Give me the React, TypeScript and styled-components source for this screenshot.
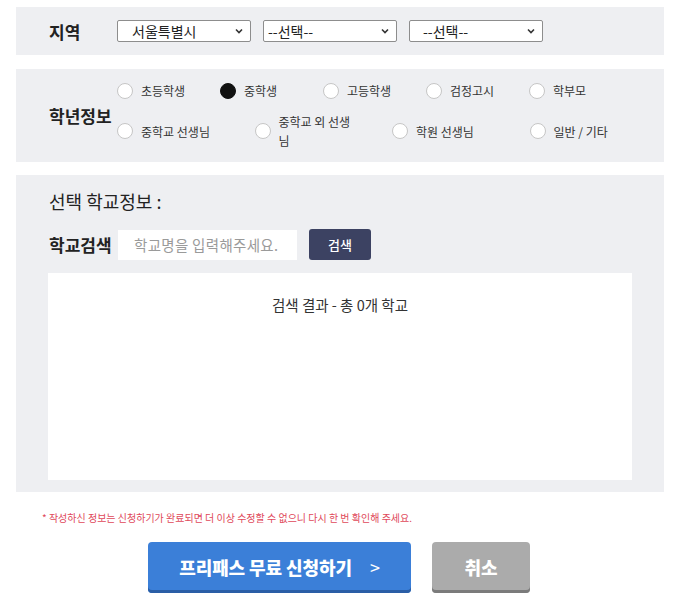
import { createGlobalStyle } from 'styled-components';
import styled from 'styled-components';

const GlobalStyle = createGlobalStyle`
  html, body {
    margin: 0;
    padding: 0;
    background: #fff;
  }
  body {
    font-family: 'Noto Sans CJK KR', 'Noto Sans', sans-serif;
    color: #222;
  }
  * {
    box-sizing: border-box;
  }
`;

const firstRow = [
  { id: 'elem', label: '초등학생' },
  { id: 'middle', label: '중학생' },
  { id: 'high', label: '고등학생' },
  { id: 'ged', label: '검정고시' },
  { id: 'parent', label: '학부모' },
];

const secondRow = [
  { id: 'mteacher', label: '중학교 선생님' },
  { id: 'oteacher', label: '중학교 외 선생님' },
  { id: 'academy', label: '학원 선생님' },
  { id: 'etc', label: '일반 / 기타' },
];

function Chevron() {
  return (
    <ChevronMark
      width="8"
      height="6"
      viewBox="0 0 8 6"
    >
      <path
        d="M1 1.5 L4 4.5 L7 1.5"
        fill="none"
        stroke="#333"
        strokeWidth="1.6"
      />
    </ChevronMark>
  );
}

function Select({ value, indent }: { value: string; indent: number }) {
  return (
    <SelectWrap>
      <SelectBox
        defaultValue={value}
        $indent={indent}
      >
        <option value={value}>{value}</option>
      </SelectBox>
      <Chevron />
    </SelectWrap>
  );
}

function Radio({ label, checked }: { label: string; checked?: boolean }) {
  return (
    <RadioItem>
      <RadioInput
        type="radio"
        name="grade"
        defaultChecked={checked}
      />
      <RadioText>{label}</RadioText>
    </RadioItem>
  );
}

export default function App() {
  return (
    <>
      <GlobalStyle />
      <Page>
        <Panel>
          <RegionRow>
            <Label>지역</Label>
            <SelectGroup>
              <Select
                value="서울특별시"
                indent={14}
              />
              <Select
                value="--선택--"
                indent={4}
              />
              <Select
                value="--선택--"
                indent={13}
              />
            </SelectGroup>
          </RegionRow>
        </Panel>

        <Panel>
          <GradeRow>
            <Label>학년정보</Label>
            <RadioRows>
              <RadioGrid $cols={5}>
                {firstRow.map(r => (
                  <Radio
                    key={r.id}
                    label={r.label}
                    checked={r.id === 'middle'}
                  />
                ))}
              </RadioGrid>
              <RadioGrid $cols={4}>
                {secondRow.map(r => (
                  <Radio
                    key={r.id}
                    label={r.label}
                  />
                ))}
              </RadioGrid>
            </RadioRows>
          </GradeRow>
        </Panel>

        <SchoolPanel>
          <SchoolTitle>선택 학교정보 :</SchoolTitle>
          <SearchRow>
            <Label>학교검색</Label>
            <SearchInput placeholder="학교명을 입력해주세요." />
            <SearchButton type="button">검색</SearchButton>
          </SearchRow>
          <ResultBox>
            <ResultText>검색 결과 - 총 0개 학교</ResultText>
          </ResultBox>
        </SchoolPanel>

        <Notice>* 작성하신 정보는 신청하기가 완료되면 더 이상 수정할 수 없으니 다시 한 번 확인해 주세요.</Notice>

        <ButtonRow>
          <ActionButton
            type="button"
            $tone="primary"
          >
            프리패스 무료 신청하기 <Arrow>&gt;</Arrow>
          </ActionButton>
          <ActionButton
            type="button"
            $tone="cancel"
          >
            취소
          </ActionButton>
        </ButtonRow>
      </Page>
    </>
  );
}

const Page = styled.div`
  width: 648px;
  margin-left: 16px;
  padding-top: 7px;
  display: flex;
  flex-direction: column;
  gap: 14px;
`;

const Panel = styled.section`
  background: #eeeff2;
`;

const Label = styled.span`
  flex: none;
  font-size: 17px;
  font-weight: 700;
  color: #222;
`;

const RegionRow = styled.div`
  height: 48px;
  display: flex;
  align-items: center;
  padding-left: 33px;

  ${Label} {
    width: 68px;
  }
`;

const SelectGroup = styled.div`
  display: flex;
  gap: 12px;
`;

const SelectWrap = styled.div`
  position: relative;
  width: 134px;
  height: 22px;
`;

const SelectBox = styled.select<{ $indent: number }>`
  appearance: none;
  display: block;
  width: 100%;
  height: 100%;
  border: 1px solid #8d8d8d;
  border-radius: 2px;
  background: #fff;
  padding: 0 20px 0 ${p => p.$indent}px;
  font-family: inherit;
  font-size: 14px;
  line-height: 20px;
  color: #222;
  outline: none;
`;

const ChevronMark = styled.svg`
  position: absolute;
  right: 8px;
  top: 8px;
  pointer-events: none;
`;

const GradeRow = styled.div`
  display: flex;
  align-items: center;
  padding: 12px 0 12px 33px;

  ${Label} {
    width: 68px;
  }
`;

const RadioRows = styled.div`
  display: flex;
  flex-direction: column;
  gap: 12px;
`;

const RadioGrid = styled.div<{ $cols: number }>`
  display: grid;
  grid-template-columns: ${p => (p.$cols === 5 ? 'repeat(5, 103px)' : 'repeat(3, 137.5px) 103px')};
  align-items: center;
`;

const RadioItem = styled.label`
  display: flex;
  align-items: center;
  gap: 8px;
`;

const RadioInput = styled.input`
  appearance: none;
  flex: none;
  margin: 0;
  width: 16px;
  height: 16px;
  border-radius: 50%;
  border: 1px solid #c6c6c6;
  background: #fff;

  &:checked {
    background: #111;
    border-color: #111;
  }
`;

const RadioText = styled.span`
  max-width: 82px;
  font-size: 12px;
  line-height: 19px;
  color: #333;
`;

const SchoolPanel = styled(Panel)`
  padding: 13px 32px 12px 32px;
  margin-top: -1px;
`;

const SchoolTitle = styled.h2`
  margin: 0;
  padding-left: 1px;
  font-size: 18px;
  font-weight: 400;
  line-height: 26px;
  color: #222;
`;

const SearchRow = styled.div`
  display: flex;
  align-items: center;
  margin-top: 15px;
  padding-left: 1px;

  ${Label} {
    width: 69px;
  }
`;

const SearchInput = styled.input`
  width: 179px;
  height: 30px;
  border: none;
  background: #fff;
  padding: 0 0 0 16px;
  font-family: inherit;
  font-size: 14.5px;
  letter-spacing: 0.3px;
  color: #333;
  outline: none;

  &::placeholder {
    color: #9a9a9a;
  }
`;

const SearchButton = styled.button`
  margin-left: 12px;
  width: 62px;
  height: 31px;
  border: none;
  border-radius: 3px;
  background: #3c4262;
  color: #fff;
  font-family: inherit;
  font-size: 13px;
  font-weight: 500;
`;

const ResultBox = styled.div`
  margin-top: 13px;
  height: 207px;
  background: #fff;
  padding-top: 20px;
  text-align: center;
`;

const ResultText = styled.p`
  margin: 0;
  font-size: 14.5px;
  line-height: 24px;
  color: #333;
`;

const Notice = styled.p`
  margin: 4px 0 0 26px;
  font-size: 10px;
  color: #e0485a;
`;

const ButtonRow = styled.div`
  display: flex;
  justify-content: center;
  gap: 21px;
  margin-top: 3px;
  padding-right: 2px;
`;

const ActionButton = styled.button<{ $tone: 'primary' | 'cancel' }>`
  height: 51px;
  width: ${p => (p.$tone === 'primary' ? '263px' : '98px')};
  border: none;
  border-radius: 4px;
  background: ${p => (p.$tone === 'primary' ? '#3b7fd8' : '#ababab')};
  box-shadow: inset 0 -3px 0 ${p => (p.$tone === 'primary' ? '#2a5ea6' : '#7b7b7b')};
  color: #fff;
  font-family: inherit;
  font-size: 18px;
  font-weight: 800;
  padding-bottom: 3px;
  letter-spacing: -0.1px;
`;

const Arrow = styled.span`
  margin-left: 14px;
  font-weight: 400;
`;
